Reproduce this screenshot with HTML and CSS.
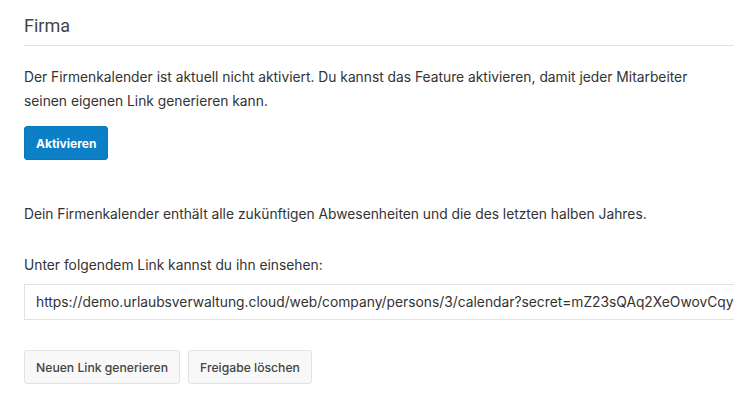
FILE: index.html
```html
<!DOCTYPE html>
<html lang="de">
<head>
<meta charset="utf-8">
<link rel="stylesheet" href="styles.css">
</head>
<body>
<div class="page">
  <h2 class="section-title">Firma</h2>
  <p class="text first">Der Firmenkalender ist aktuell nicht aktiviert. Du kannst das Feature aktivieren, damit jeder Mitarbeiter seinen eigenen Link generieren kann.</p>
  <button class="btn btn-primary">Aktivieren</button>
  <p class="text info">Dein Firmenkalender enthält alle zukünftigen Abwesenheiten und die des letzten halben Jahres.</p>
  <p class="text label">Unter folgendem Link kannst du ihn einsehen:</p>
  <div class="link-field">https://demo.urlaubsverwaltung.cloud/web/company/persons/3/calendar?secret=mZ23sQAq2XeOwovCqyC8kLr4</div>
  <div class="actions">
    <button class="btn btn-default">Neuen Link generieren</button>
    <button class="btn btn-default">Freigabe löschen</button>
  </div>
</div>
</body>
</html>
```

FILE: styles.css
```css
html, body {
  margin: 0;
  padding: 0;
  background: #fff;
  overflow: hidden;
}
.page {
  width: 800px;
  padding-left: 24px;
  font-family: Inter, "Liberation Sans", Arial, sans-serif;
  color: #333;
  font-size: 13.8px;
}
.section-title {
  margin: 14px 0 0;
  font-family: Roboto, "Liberation Sans", sans-serif;
  font-weight: 400;
  font-size: 18px;
  line-height: 24px;
  color: #444;
  padding-bottom: 7px;
  border-bottom: 1px solid #e3e3e3;
}
.text {
  margin: 0;
  line-height: 24px;
  width: 700px;
}
.text.first { margin-top: 19px; }
.text.info { margin-top: 42px; }
.text.label { margin-top: 27px; }
.btn {
  display: inline-flex;
  align-items: center;
  height: 34px;
  padding: 0 11px;
  font-family: Inter, "Liberation Sans", Arial, sans-serif;
  border-radius: 3px;
  cursor: pointer;
}
.btn-primary {
  margin-top: 13px;
  background: #0b80c6;
  border: 1px solid #0a78ba;
  color: #fff;
  font-weight: 700;
  font-size: 12px;
}
.link-field {
  margin-top: 7px;
  height: 36px;
  box-sizing: border-box;
  border: 1px solid #e2e2e2;
  border-right: none;
  padding: 0 11px;
  display: flex;
  align-items: center;
  white-space: nowrap;
  overflow: hidden;
  font-size: 13.8px;
  color: #333;
}
.actions {
  margin-top: 30px;
  display: flex;
  gap: 8px;
}
.btn-default {
  background: #f8f8f8;
  border: 1px solid #e2e2e2;
  color: #444;
  font-size: 12.2px;
  font-weight: 500;
  padding: 0 11px;
}
```
